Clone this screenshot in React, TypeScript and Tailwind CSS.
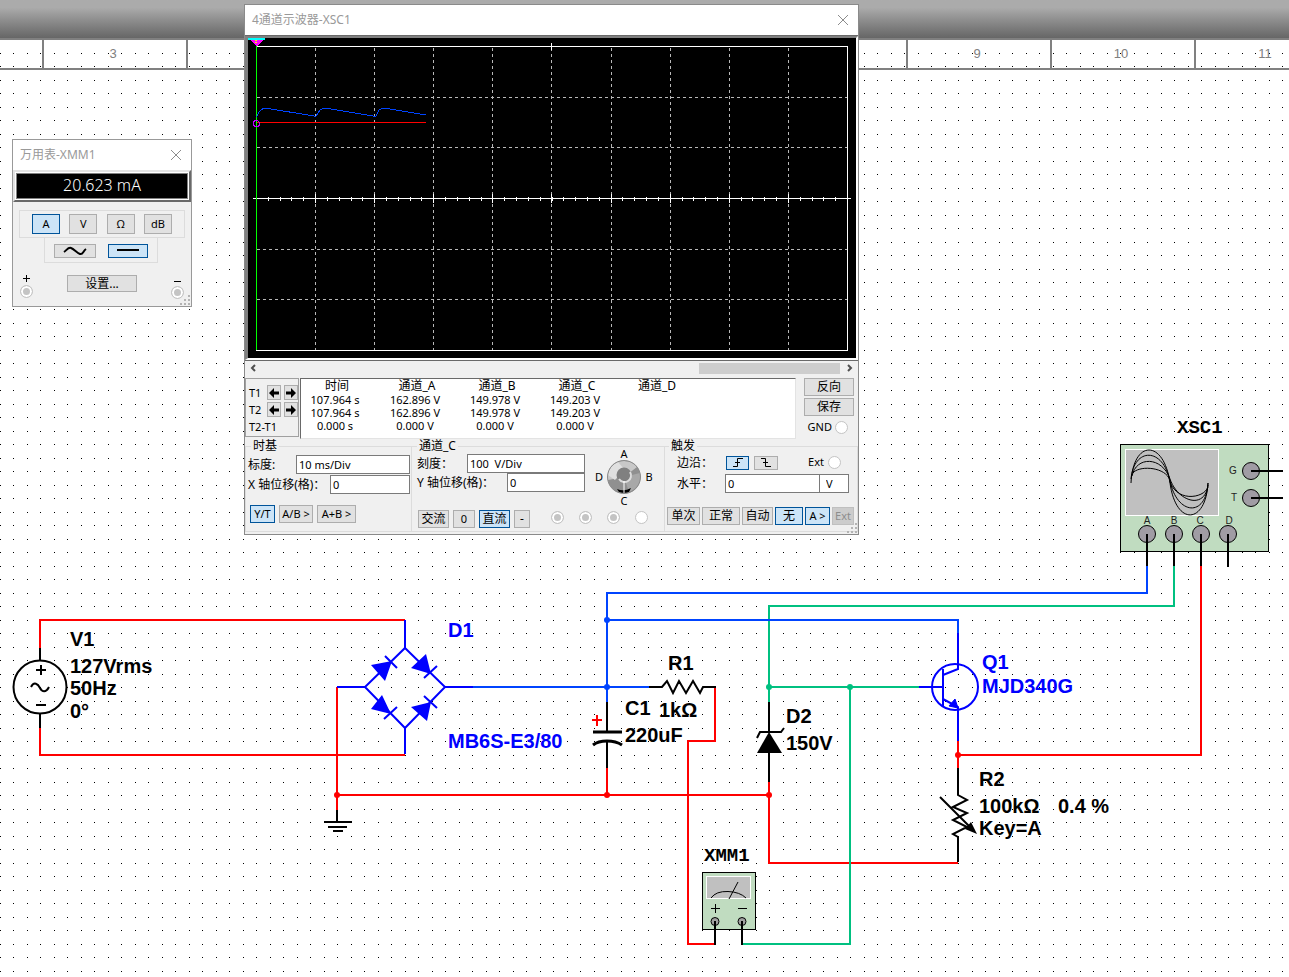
import { useState } from 'react'
import type { ReactNode } from 'react'

const RULER_MARKS = ['3', '4', '5', '6', '7', '8', '9', '10', '11']

const CHANNELS = ['通道_A', '通道_B', '通道_C', '通道_D']

const READINGS = [
  ['107.964 s', '162.896 V', '149.978 V', '149.203 V', ''],
  ['107.964 s', '162.896 V', '149.978 V', '149.203 V', ''],
  ['0.000 s', '0.000 V', '0.000 V', '0.000 V', ''],
]

const WIRES = [
  { color: '#ff0000', d: 'M40 648V620H405 M40 728V755H405 M337 687V810 M337 795H769 M607 768V795 M769 782V863H958' },
  { color: '#ff0000', d: 'M715 687V741H688V944H715 M958 741V768 M958 755H1201V566' },
  { color: '#00c080', d: 'M1174 566V606H769V702 M769 687H919 M850 687V944H742' },
  { color: '#0044ff', d: 'M473 687H649 M607 702V593H1147V566 M607 620H958V633' },
]

const JUNCTIONS = [
  { x: 337, y: 795, color: '#ff0000' },
  { x: 607, y: 795, color: '#ff0000' },
  { x: 769, y: 795, color: '#ff0000' },
  { x: 958, y: 755, color: '#ff0000' },
  { x: 607, y: 620, color: '#0044ff' },
  { x: 607, y: 687, color: '#0044ff' },
  { x: 769, y: 687, color: '#00c080' },
  { x: 850, y: 687, color: '#00c080' },
]

const LABELS = [
  { x: 70, y: 646, text: 'V1' },
  { x: 70, y: 673, text: '127Vrms' },
  { x: 70, y: 695, text: '50Hz' },
  { x: 70, y: 718, text: '0°' },
  { x: 448, y: 637, text: 'D1', blue: true },
  { x: 448, y: 748, text: 'MB6S-E3/80', blue: true },
  { x: 668, y: 670, text: 'R1' },
  { x: 625, y: 715, text: 'C1' },
  { x: 659, y: 717, text: '1kΩ' },
  { x: 625, y: 742, text: '220uF' },
  { x: 786, y: 723, text: 'D2' },
  { x: 786, y: 750, text: '150V' },
  { x: 982, y: 669, text: 'Q1', blue: true },
  { x: 982, y: 693, text: 'MJD340G', blue: true },
  { x: 979, y: 786, text: 'R2' },
  { x: 979, y: 813, text: '100kΩ' },
  { x: 1058, y: 813, text: '0.4 %' },
  { x: 979, y: 835, text: 'Key=A' },
]

function Schematic() {
  return (
    <svg className="absolute inset-0 h-full w-full" aria-label="schematic">
      <defs>
        {/* 13.5px grid, snapped to whole pixels over two cells */}
        <pattern id="dots" width="27" height="27" patternUnits="userSpaceOnUse">
          <path d="M0 12h1v1h-1z M13 12h1v1h-1z M0 26h1v1h-1z M13 26h1v1h-1z" shapeRendering="crispEdges" />
        </pattern>
      </defs>
      <rect y="40" width="100%" height="100%" fill="url(#dots)" />

      {WIRES.map((w) => (
        <path key={w.d} d={w.d} fill="none" stroke={w.color} strokeWidth="2" />
      ))}

      {/* V1 */}
      <g fill="none" stroke="#000" strokeWidth="2">
        <circle cx="40" cy="687" r="26.5" />
        <path d="M40 648V660 M40 714V728 M36 670H46 M41 665V675 M36 705H46" />
        <path d="M31 687C34 681 38 684 40 688S46 693 49 687" />
      </g>

      {/* D1 bridge */}
      <g fill="none" stroke="#0000ff" strokeWidth="2">
        <path d="M405 648L445 687L405 728L365 687Z M405 620V648 M405 728V754 M337 687H365 M445 687H473" />
        <path d="M385 656L397 668 M424 678L437 666 M384 719L397 707 M424 696L437 708" />
      </g>
      <path
        fill="#0000ff"
        d="M371 665L392 661L385 681Z M426 654L431 674L411 668Z M382 695L391 714L371 709Z M411 707L431 702L427 721Z"
      />

      {/* ground */}
      <path d="M337 810V822 M324 822H352 M328 827H347 M333 831H343" stroke="#000" strokeWidth="2" />

      {/* R1 */}
      <path
        d="M649 687H662L667 681L673 693L679 681L686 693L693 681L700 693L703 687H716"
        fill="none" stroke="#000" strokeWidth="2"
      />

      {/* C1 */}
      <path d="M607 702V731 M607 741V768" stroke="#000" strokeWidth="2" />
      <path d="M593 732H622 M593 745Q598 741 607 741T622 745" fill="none" stroke="#000" strokeWidth="3" />
      <path d="M592 720H602 M597 715V726" stroke="#ff0000" strokeWidth="2" />

      {/* D2 */}
      <path d="M769 702V732 M769 753V782 M757 738L760 732H781L784 728" fill="none" stroke="#000" strokeWidth="2" />
      <path d="M769 732L782 753H757Z" />

      {/* Q1 */}
      <g fill="none" stroke="#0000ff" strokeWidth="2">
        <circle cx="955" cy="687" r="23" />
        <path d="M958 633V669L943 675 M943 669V706 M919 687H943 M943 699L958 707V741" />
      </g>
      <path d="M949 706L955 699L958 708Z" fill="#0000ff" stroke="#0000ff" />

      {/* R2 */}
      <path
        d="M958 768V795L967 800L953 807L967 813L953 820L967 827L953 834L958 837V862 M940 797L974 831"
        fill="none" stroke="#000" strokeWidth="2"
      />
      <path d="M977 834L965 829L971 822Z" />

      {/* XSC1 */}
      <rect x="1120.5" y="444.5" width="148" height="107" fill="#c0dcc0" stroke="#000" />
      <rect x="1125.5" y="449.5" width="93" height="66" fill="#c0c0c0" stroke="#fff" />
      <g fill="none" stroke="#000">
        <path d="M1131 483C1133 439 1164 439 1170 483S1206 524 1208 483" />
        <path d="M1131 479C1134 447 1163 447 1170 481S1206 518 1208 483" />
        <path d="M1132 476C1136 456 1162 456 1170 479S1205 510 1208 485" />
        <path d="M1133 473C1138 466 1162 466 1169 478C1174 503 1204 499 1208 487" />
      </g>
      <g fill="#a09ca4" stroke="#000">
        <circle cx="1147" cy="534" r="8.5" />
        <circle cx="1174" cy="534" r="8.5" />
        <circle cx="1201" cy="534" r="8.5" />
        <circle cx="1228" cy="534" r="8.5" />
        <circle cx="1251" cy="471" r="8.5" />
        <circle cx="1251" cy="498" r="8.5" />
      </g>
      <path
        d="M1147 534V566 M1174 534V566 M1201 534V566 M1228 534V567 M1251 471H1283 M1251 498H1283"
        stroke="#000" strokeWidth="2"
      />
      <g className="font-['Liberation_Sans'] text-[10px]" textAnchor="middle" fill="#222">
        <text x="1147" y="524">A</text>
        <text x="1174" y="524">B</text>
        <text x="1200" y="524">C</text>
        <text x="1229" y="524">D</text>
        <text x="1233" y="474">G</text>
        <text x="1234" y="501">T</text>
      </g>

      {/* XMM1 */}
      <rect x="702.5" y="872.5" width="53" height="57" fill="#c0dcc0" stroke="#000" />
      <rect x="706.5" y="876.5" width="44" height="22" fill="#c0c0c0" stroke="#fff" />
      <path
        d="M711 898Q716 891 728 891.5T746 898 M738 882L729 899 M711 908.5H720 M715.5 904V913 M738 908.5H747"
        fill="none" stroke="#000"
      />
      <circle cx="715" cy="921.5" r="4" fill="#a0a0a0" stroke="#000" />
      <circle cx="742" cy="921.5" r="4" fill="#a0a0a0" stroke="#000" />
      <path d="M715 921V945 M742 921V945" stroke="#000" strokeWidth="2" />

      {JUNCTIONS.map((j) => (
        <circle key={`${j.x}-${j.y}`} cx={j.x} cy={j.y} r="3" fill={j.color} />
      ))}

      <g className="font-['Liberation_Sans'] text-[20px] font-bold">
        {LABELS.map((l) => (
          <text key={l.text} x={l.x} y={l.y} fill={l.blue ? '#0000ff' : '#000'}>{l.text}</text>
        ))}
      </g>
      <g className="font-['Liberation_Mono'] text-[19px] font-bold">
        <text x="1177" y="433">XSC1</text>
        <text x="704" y="861">XMM1</text>
      </g>
    </svg>
  )
}

interface ToolButtonProps {
  children: ReactNode
  active?: boolean
  disabled?: boolean
  label?: string
  className?: string
  onClick?: () => void
}

function ToolButton({ children, active, disabled, label, className = '', onClick }: ToolButtonProps) {
  const tone = active
    ? 'border-[#00549a] bg-[#cce4f7]'
    : disabled
      ? 'border-[#bfbfbf] bg-[#cccccc] text-[#8d8d8d]'
      : 'border-[#adadad] bg-[#e1e1e1]'
  return (
    <button
      aria-label={label}
      disabled={disabled}
      onClick={onClick}
      className={`flex flex-none items-center justify-center whitespace-nowrap border ${tone} ${className}`}
    >
      {children}
    </button>
  )
}

function Jack({ label, filled }: { label: string; filled?: boolean }) {
  return (
    <input
      type="radio"
      aria-label={label}
      className={`block h-[13px] w-[13px] flex-none appearance-none rounded-full border border-[#c4c4c4] ${
        filled ? 'bg-[#c4c4c4] shadow-[inset_0_0_0_2px_#fff]' : 'bg-white'
      }`}
    />
  )
}

function TitleBar({ title }: { title: string }) {
  return (
    <header className="flex h-[30px] items-center justify-between bg-white pr-[9px] pl-[7px] text-[12px] text-[#999999]">
      <h2>{title}</h2>
      <button aria-label="关闭">
        <svg width="12" height="12" stroke="#8c8c8c" fill="none">
          <path d="M1 1L11 11M11 1L1 11" />
        </svg>
      </button>
    </header>
  )
}

function Grip() {
  return (
    <svg className="absolute right-0 bottom-0" width="11" height="11" fill="#b4b4b4">
      <path d="M8 0h2v2h-2z M4 4h2v2h-2z M8 4h2v2h-2z M0 8h2v2h-2z M4 8h2v2h-2z M8 8h2v2h-2z" />
    </svg>
  )
}

function Multimeter() {
  const [mode, setMode] = useState('A')
  return (
    <section className="absolute top-[139px] left-[12px] w-[180px] border border-[#999999] bg-[#f0f0f0] text-[11px]">
      <TitleBar title="万用表-XMM1" />
      <div className="border-2 border-t-[#e3e3e3] border-l-[#e3e3e3] border-r-[#696969] border-b-[#696969] bg-white p-px">
        <output className="flex h-[26px] items-center justify-center border border-[#808080] bg-black pb-[2px] text-[16px] font-light text-white">
          20.623 mA
        </output>
      </div>
      <div className="mx-[6px] mt-[8px] flex h-[28px] items-center justify-between border border-[#dcdcdc] px-[12px]">
        {['A', 'V', 'Ω', 'dB'].map((m) => (
          <ToolButton key={m} active={mode === m} onClick={() => setMode(m)} className="h-[20px] w-[28px]">{m}</ToolButton>
        ))}
      </div>
      <div className="mr-[33px] ml-[31px] flex h-[25px] items-center justify-between border border-t-0 border-[#dcdcdc] px-[9px] pt-px">
        <ToolButton label="交流" className="h-[14px] w-[42px]">
          <svg width="24" height="10" fill="none" stroke="#000" strokeWidth="2">
            <path d="M1 6C4 4 5 1 8 2S14 7 17 8S20 5 23 3" />
          </svg>
        </ToolButton>
        <ToolButton active label="直流" className="h-[14px] w-[40px]">
          <svg width="22" height="4" stroke="#000" strokeWidth="2"><path d="M0 1H22" /></svg>
        </ToolButton>
      </div>
      <div className="flex h-[43px] items-start justify-between px-[7px] pt-[12px]">
        <div className="flex flex-col items-center gap-[3px]">
          <svg width="7" height="7" stroke="#000"><path d="M0 3.5H7M3.5 0V7" /></svg>
          <Jack label="+" filled />
        </div>
        <ToolButton className="h-[17px] w-[70px] text-[12px]">设置...</ToolButton>
        <div className="flex flex-col items-center gap-[4px] pt-[6px]">
          <svg width="7" height="1" stroke="#000"><path d="M0 .5H7" /></svg>
          <Jack label="−" filled />
        </div>
      </div>
      <Grip />
    </section>
  )
}

const V_LINES = [315, 374, 433, 492, 551, 611, 670, 729, 788]
const H_LINES = [97, 147, 249, 299]
const TICKS = Array.from({ length: 49 }, (_, i) => Math.round(256 + (i + 1) * 11.82))

function ScopeScreen() {
  return (
    <svg className="block w-full" height="320" viewBox="248 38 608 320" shapeRendering="crispEdges" aria-label="trace">
      <rect x="248" y="38" width="608" height="320" />
      <g stroke="#b8b8b8" strokeDasharray="3 3">
        {V_LINES.map((x) => <path key={x} d={`M${x + 0.5} 48V350`} />)}
        {H_LINES.map((y) => <path key={y} d={`M257 ${y + 0.5}H847`} />)}
      </g>
      <g stroke="#fff" fill="none">
        <path d="M256 46.5H847.5V350.5H256 M551.5 43V50 M253 198.5H851" />
        {TICKS.map((x) => <path key={x} d={`M${x + 0.5} 197V201`} />)}
        {V_LINES.map((x) => <path key={x} d={`M${x + 0.5} 194V203`} />)}
      </g>
      <path d="M256.5 46V350" stroke="#00ff00" />
      <path d="M257 122.5H426" stroke="#ff0000" />
      <path
        d="M256.5 117L259 112L263 108.5H268L314 116H316L320 110L323 108.5H328L373 116H376L379 110L382 108.5H387L420 114H426"
        stroke="#0044ff" fill="none"
      />
      <circle cx="256.5" cy="123.5" r="3" stroke="#c000ff" fill="none" />
      <path d="M248 38H265L257 46Z" fill="#ff00ff" />
      <path d="M248 38H265V40H248Z" fill="#00ffff" />
      <path d="M255 40h2v1h-2z M255 42h2v1h-2z" fill="#ffff00" />
    </svg>
  )
}

function ArrowButton({ label, left }: { label: string; left?: boolean }) {
  return (
    <ToolButton label={label} className="h-[15px] w-[14px]">
      <svg width="10" height="10" className="flex-none">
        {left ? <path d="M0 5L5 0V3.5H10V6.5H5V10Z" /> : <path d="M10 5L5 0V3.5H0V6.5H5V10Z" />}
      </svg>
    </ToolButton>
  )
}

interface FieldProps {
  id: string
  label: string
  value: string
  width: string
}

function Field({ id, label, value, width }: FieldProps) {
  return (
    <div className="flex h-[19px] items-center justify-between">
      <label htmlFor={id} className="whitespace-nowrap text-[12px]">{label}</label>
      <input
        id={id}
        defaultValue={value}
        className={`h-[19px] border border-[#7a7a7a] bg-white px-[2px] text-[11px] ${width}`}
      />
    </div>
  )
}

function Knob() {
  return (
    <div className="-mt-[5px] grid w-[62px] grid-cols-[12px_38px_12px] grid-rows-[12px_34px_14px] place-items-center text-[11px] leading-3">
      <span className="col-start-2">A</span>
      <span className="col-start-1 row-start-2">D</span>
      <svg className="row-start-2" width="34" height="34">
        <circle cx="17" cy="17" r="16.5" fill="#909090" />
        <path d="M1 20A16.5 16.5 0 0 1 30 7L17 17Z" fill="#c8c8c8" />
        <path d="M1 15A16.5 16.5 0 0 1 11 2L17 9L8 20Z" fill="#e0e0e0" />
        <path d="M17 17L33 13A16.5 16.5 0 0 1 22 32Z" fill="#a8a8a8" />
        <circle cx="17" cy="15" r="7.5" fill="#808080" />
        <path d="M12 19A6.5 6.5 0 0 0 23 12" fill="none" stroke="#ddd" strokeWidth="2" />
        <path d="M10 29Q17 32 24 28L22 32Q17 34 12 32Z" />
        <path d="M17 21V33" stroke="#fff" />
        <circle cx="17" cy="17" r="16.5" fill="none" stroke="#8a8a8a" />
      </svg>
      <span className="col-start-3 row-start-2">B</span>
      <span className="col-start-2 row-start-3">C</span>
    </div>
  )
}

function Oscilloscope() {
  const [sweep, setSweep] = useState('Y/T')
  const [trigger, setTrigger] = useState('无')
  return (
    <section className="absolute top-[4px] left-[244px] w-[615px] border border-[#8a8a8a] bg-[#f0f0f0] text-[11px]">
      <TitleBar title="4通道示波器-XSC1" />
      <div className="border-t border-[#696969]" />
      <div className="border-t-2 border-r-2 border-b-2 border-l-[3px] border-t-[#808080] border-r-white border-b-white border-l-[#808080]">
        <ScopeScreen />
      </div>

      <div className="flex h-[18px] items-center gap-[6px] border-t border-[#696969] px-[4px] pb-[3px]">
        <button aria-label="向左滚动">
          <svg width="8" height="8" fill="none" stroke="#505050" strokeWidth="2"><path d="M6 1L3 4L6 7" /></svg>
        </button>
        <div className="flex h-[11px] flex-1 justify-end">
          <div className="h-full w-[141px] bg-[#cdcdcd]" />
        </div>
        <button aria-label="向右滚动">
          <svg width="8" height="8" fill="none" stroke="#505050" strokeWidth="2"><path d="M2 1L5 4L2 7" /></svg>
        </button>
      </div>

      <div className="flex h-[61px] items-start gap-px">
        <div className="flex h-[59px] w-[54px] flex-none flex-col border border-[#a0a0a0] pt-[6px] pl-[3px]">
          <div className="flex h-[17px] items-start justify-between leading-4">
            T1
            <div className="flex gap-[3px]"><ArrowButton label="T1 左移" left /><ArrowButton label="T1 右移" /></div>
          </div>
          <div className="flex h-[17px] items-start justify-between leading-4">
            T2
            <div className="flex gap-[3px]"><ArrowButton label="T2 左移" left /><ArrowButton label="T2 右移" /></div>
          </div>
          <span className="leading-4">T2-T1</span>
        </div>
        <div className="h-[61px] w-[496px] flex-none border border-t-[#696969] border-l-[#696969] border-r-[#e3e3e3] border-b-[#e3e3e3] bg-white">
          <table className="table-fixed text-center leading-[13px]">
            <thead>
              <tr className="h-[14px] text-[12px] leading-[14px]">
                <th scope="col" className="w-[76px] p-0 pr-1 font-normal">时间</th>
                {CHANNELS.map((c) => (
                  <th key={c} scope="col" className="w-20 p-0 font-normal">{c}</th>
                ))}
              </tr>
            </thead>
            <tbody>
              {READINGS.map((row, i) => (
                <tr key={i} className="h-[13px]">
                  {row.map((cell, j) => (
                    <td key={j} className={j === 0 ? 'p-0 pr-2' : 'p-0 pr-1'}>{cell}</td>
                  ))}
                </tr>
              ))}
            </tbody>
          </table>
        </div>
        <div className="flex flex-1 flex-col gap-[2px] pr-[4px] pl-[7px] text-[12px]">
          <ToolButton className="h-[18px] w-full">反向</ToolButton>
          <ToolButton className="h-[18px] w-full">保存</ToolButton>
          <label className="flex items-center justify-end gap-[3px] pt-px pr-[6px] text-[11px] leading-4">
            GND <Jack label="GND" />
          </label>
        </div>
      </div>

      <div className="flex h-[95px] items-start">
        <fieldset className="h-[93px] w-[167px] flex-none border border-[#dcdcdc] pr-[1px] pl-[2px]">
          <legend className="ml-[3px] px-[2px] text-[12px] leading-[14px]">时基</legend>
          <div className="flex flex-col gap-px pt-[2px]">
            <Field id="tb-scale" label="标度:" value="10 ms/Div" width="w-[114px]" />
            <Field id="tb-pos" label="X 轴位移(格)：" value="0" width="w-[80px]" />
          </div>
          <div className="mt-[11px] flex gap-[4px] pl-[2px]">
            <ToolButton active={sweep === 'Y/T'} onClick={() => setSweep('Y/T')} className="h-[18px] w-[25px]">Y/T</ToolButton>
            <ToolButton active={sweep === 'A/B'} onClick={() => setSweep('A/B')} className="h-[18px] w-[34px]">A/B &gt;</ToolButton>
            <ToolButton active={sweep === 'A+B'} onClick={() => setSweep('A+B')} className="h-[18px] w-[39px]">A+B &gt;</ToolButton>
          </div>
        </fieldset>

        <fieldset className="h-[93px] w-[253px] flex-none border border-l-0 border-[#dcdcdc] pl-[5px]">
          <legend className="px-[2px] text-[12px] leading-[14px]">通道_C</legend>
          <div className="flex items-start gap-[8px]">
            <div className="w-[168px] pt-px">
              <Field id="ch-scale" label="刻度：" value="100  V/Div" width="w-[118px]" />
              <Field id="ch-pos" label="Y 轴位移(格)：" value="0" width="w-[78px]" />
            </div>
            <Knob />
          </div>
          <div className="mt-[2px] flex items-center pl-px text-[12px]">
            <div className="flex gap-[4px]">
              <ToolButton className="h-[18px] w-[31px]">交流</ToolButton>
              <ToolButton className="h-[18px] w-[22px] text-[11px]">0</ToolButton>
              <ToolButton active className="h-[18px] w-[31px]">直流</ToolButton>
              <ToolButton className="h-[18px] w-[16px]">-</ToolButton>
            </div>
            <div className="-mt-[4px] ml-[21px] flex gap-[15px]">
              <Jack label="A" filled />
              <Jack label="B" filled />
              <Jack label="C" filled />
              <Jack label="D" />
            </div>
          </div>
        </fieldset>

        <fieldset className="h-[93px] flex-1 border border-l-0 border-[#dcdcdc] pl-[2px]">
          <legend className="ml-[2px] px-[2px] text-[12px] leading-[14px]">触发</legend>
          <div className="flex h-[19px] items-center pl-[10px] text-[12px]">
            <span className="w-[49px]">边沿：</span>
            <ToolButton active label="上升沿" className="h-[14px] w-[23px]">
              <svg width="10" height="9" fill="none" stroke="#000"><path d="M0 8.5H4.5V.5H10M2 4.5H7" /></svg>
            </ToolButton>
            <ToolButton label="下降沿" className="ml-[5px] h-[14px] w-[24px]">
              <svg width="10" height="9" fill="none" stroke="#000"><path d="M0 .5H4.5V8.5H10M2 4.5H7" /></svg>
            </ToolButton>
            <label className="ml-auto flex items-center gap-[4px] pr-[16px] text-[11px]">
              Ext <Jack label="Ext" />
            </label>
          </div>
          <div className="mt-[2px] flex h-[19px] items-center pl-[10px] text-[12px]">
            <label htmlFor="tr-level" className="w-[48px]">水平：</label>
            <input id="tr-level" defaultValue="0" className="h-[19px] w-[95px] border border-[#7a7a7a] bg-white px-[2px] text-[11px]" />
            <input aria-label="单位" defaultValue="V" className="h-[19px] w-[29px] border border-l-0 border-[#7a7a7a] bg-white px-[6px] text-[11px]" />
          </div>
          <div className="mt-[14px] flex gap-[2px] text-[12px]">
            <ToolButton active={trigger === '单次'} onClick={() => setTrigger('单次')} className="h-[18px] w-[33px]">单次</ToolButton>
            <ToolButton active={trigger === '正常'} onClick={() => setTrigger('正常')} className="h-[18px] w-[38px]">正常</ToolButton>
            <ToolButton active={trigger === '自动'} onClick={() => setTrigger('自动')} className="h-[18px] w-[31px]">自动</ToolButton>
            <ToolButton active={trigger === '无'} onClick={() => setTrigger('无')} className="h-[18px] w-[28px]">无</ToolButton>
            <ToolButton active className="h-[18px] w-[25px] text-[11px]">A &gt;</ToolButton>
            <ToolButton disabled className="h-[18px] w-[22px] text-[11px]">Ext</ToolButton>
          </div>
        </fieldset>
      </div>
      <Grip />
    </section>
  )
}

export default function App() {
  return (
    <main className="relative min-h-screen overflow-hidden bg-white font-['Noto_Sans','Noto_Sans_CJK_SC',sans-serif] text-black">
      <div className="h-[38px] bg-linear-to-b from-[#ababab] from-20% to-[#666666]" />
      {/* zone ruler */}
      <div className="flex h-[32px] overflow-hidden border-y-2 border-[#808080] font-['Liberation_Sans'] text-[13px] text-[#808080]">
        <div className="w-[44px] flex-none border-r-2 border-[#808080]" />
        {RULER_MARKS.map((m) => (
          <div key={m} className="flex w-36 flex-none items-center justify-center border-r-2 border-[#808080] pr-1">{m}</div>
        ))}
      </div>
      <Schematic />
      <Oscilloscope />
      <Multimeter />
    </main>
  )
}
